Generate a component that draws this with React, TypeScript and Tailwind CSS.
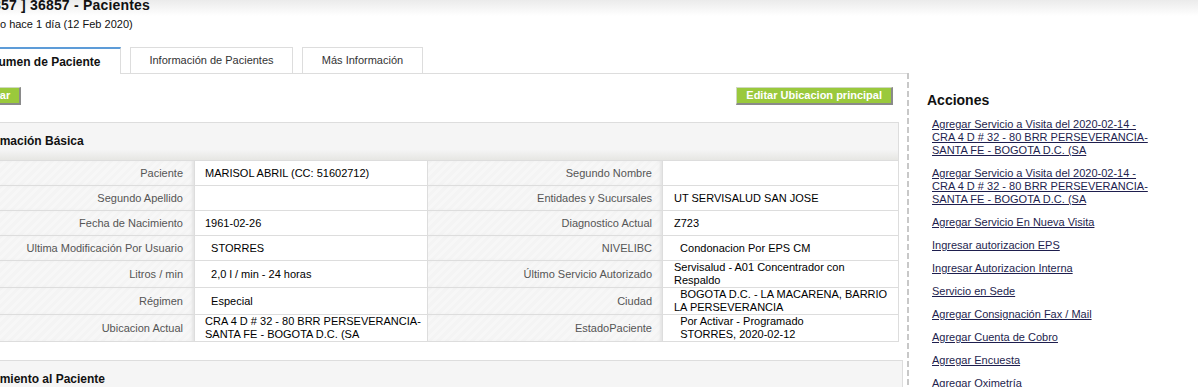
import React from 'react';

type Field = { label: string; value: React.ReactNode };

const sp = '\u00a0\u00a0';

const rows: [Field, Field][] = [
  [
    { label: 'Paciente', value: 'MARISOL ABRIL (CC: 51602712)' },
    { label: 'Segundo Nombre', value: '' },
  ],
  [
    { label: 'Segundo Apellido', value: '' },
    { label: 'Entidades y Sucursales', value: 'UT SERVISALUD SAN JOSE' },
  ],
  [
    { label: 'Fecha de Nacimiento', value: '1961-02-26' },
    { label: 'Diagnostico Actual', value: 'Z723' },
  ],
  [
    { label: 'Ultima Modificación Por Usuario', value: sp + 'STORRES' },
    { label: 'NIVELIBC', value: sp + 'Condonacion Por EPS CM' },
  ],
  [
    { label: 'Litros / min', value: sp + '2,0 l / min - 24 horas' },
    {
      label: 'Último Servicio Autorizado',
      value: (
        <>
          Servisalud - A01 Concentrador con
          <br />
          Respaldo
        </>
      ),
    },
  ],
  [
    { label: 'Régimen', value: sp + 'Especial' },
    {
      label: 'Ciudad',
      value: (
        <>
          {sp}BOGOTA D.C. - LA MACARENA, BARRIO
          <br />
          LA PERSEVERANCIA
        </>
      ),
    },
  ],
  [
    {
      label: 'Ubicacion Actual',
      value: (
        <>
          CRA 4 D # 32 - 80 BRR PERSEVERANCIA-
          <br />
          SANTA FE - BOGOTA D.C. (SA
        </>
      ),
    },
    {
      label: 'EstadoPaciente',
      value: (
        <>
          {sp}Por Activar - Programado
          <br />
          {sp}STORRES, 2020-02-12
        </>
      ),
    },
  ],
];

const visita = [
  'Agregar Servicio a Visita del 2020-02-14 -',
  'CRA 4 D # 32 - 80 BRR PERSEVERANCIA-',
  'SANTA FE - BOGOTA D.C. (SA',
];

const acciones: string[][] = [
  visita,
  visita,
  ['Agregar Servicio En Nueva Visita'],
  ['Ingresar autorizacion EPS'],
  ['Ingresar Autorizacion Interna'],
  ['Servicio en Sede'],
  ['Agregar Consignación Fax / Mail'],
  ['Agregar Cuenta de Cobro'],
  ['Agregar Encuesta'],
  ['Agregar Oximetría'],
];

const labelCell =
  'flex items-center justify-end text-right text-[#555] border-r border-[#ddd] bg-[repeating-linear-gradient(135deg,#f4f4f4_0px,#f4f4f4_3px,#f7f7f7_3px,#f7f7f7_6px)] shadow-[inset_-3px_0_3px_-1px_#e4e4e4]';

function GreenButton({ children, className = '' }: { children: React.ReactNode; className?: string }) {
  return (
    <button
      className={`h-[18px] bg-[#9ac93c] border-t border-l border-t-[#cfd8c0] border-l-[#cfd8c0] border-b-2 border-r-2 border-b-[#8a8a8a] border-r-[#8a8a8a] px-[9px] text-[11px] font-bold leading-[15px] text-white ${className}`}
    >
      {children}
    </button>
  );
}

export default function App() {
  return (
    <div className="w-[1198px] h-[387px] overflow-hidden bg-[linear-gradient(to_bottom,#ebebeb_0px,#ffffff_16px)] font-['Liberation_Sans',Arial,sans-serif] text-black">
      <div className="-ml-[44px]">
        {/* Header */}
        <h1 className="pl-[12px] text-[14px] font-bold leading-[10px] tracking-[0.2px] text-[#111]">
          [ 36857 ] 36857 - Pacientes
        </h1>
        <p className="mt-[8px] pl-[14px] text-[11px] leading-[13px] text-[#111]">Creado hace 1 día (12 Feb 2020)</p>

        <div className="mt-[16px] flex">
          {/* Main column */}
          <div className="w-[951px] shrink-0">
            {/* Tabs */}
            <div className="flex h-[27px] items-end border-b border-[#ddd]">
              <div className="-mb-px flex h-[27px] w-[165px] items-center justify-center border-t-2 border-x border-t-[#5d9cd8] border-x-[#ddd] bg-white text-[12px] font-bold leading-[14px] text-[#111]">
                Resumen de Paciente
              </div>
              <div className="ml-[9px] flex h-[26px] w-[163px] items-center justify-center border-t border-x border-[#ddd] bg-white text-[11px] leading-[13px] text-[#333]">
                Información de Pacientes
              </div>
              <div className="ml-[9px] flex h-[26px] w-[121px] items-center justify-center border-t border-x border-[#ddd] bg-white text-[11px] leading-[13px] text-[#333]">
                Más Información
              </div>
            </div>

            {/* Buttons */}
            <div className="mt-[13px] flex items-start justify-between">
              <GreenButton className="ml-[13px]">Editar</GreenButton>
              <GreenButton className="mr-[14px]">Editar Ubicacion principal</GreenButton>
            </div>

            {/* Información Básica */}
            <div className="mt-[17px] mr-[8px] border border-[#ddd]">
              <div className="h-[37px] pl-[16px] pt-[11px] bg-[linear-gradient(to_bottom,#f5f5f5_0%,#f5f5f5_72%,#e6e6e3_100%)] text-[12px] font-bold leading-[14px] text-[#111]">
                Información Básica
              </div>
              <div className="border-t border-[#ddd] text-[11px] leading-[13px]">
                {rows.map((row, i) => (
                  <div
                    key={i}
                    className={`flex ${i < rows.length - 1 ? 'min-h-[25px] border-b border-[#ddd]' : 'min-h-[24px]'}`}
                  >
                    <div className={`${labelCell} w-[238px] shrink-0 pr-[11px]`}>{row[0].label}</div>
                    <div className="flex w-[233px] shrink-0 items-center whitespace-nowrap border-r border-[#ddd] pl-[10px] text-black">
                      <span>{row[0].value}</span>
                    </div>
                    <div className={`${labelCell} w-[235px] shrink-0 pr-[10px]`}>{row[1].label}</div>
                    <div className="flex flex-1 items-center whitespace-nowrap pl-[11px] text-black">
                      <span>{row[1].value}</span>
                    </div>
                  </div>
                ))}
              </div>
            </div>

            {/* Seguimiento */}
            <div className="mt-[18px] mr-[4px] border border-[#ddd] bg-[#f5f5f5]">
              <div className="h-[40px] pl-[10px] pt-[11px] text-[12px] font-bold leading-[14px] text-[#111]">
                Seguimiento al Paciente
              </div>
            </div>
          </div>

          {/* Sidebar */}
          <div className="mt-[26px] flex flex-1">
            <div className="w-[2px] shrink-0 bg-[repeating-linear-gradient(to_bottom,#c8c8c8_0px,#c8c8c8_6px,#ffffff_6px,#ffffff_9px)]" />
            <div className="pl-[18px] pt-[19px]">
              <h2 className="text-[14px] font-bold leading-[16px] text-[#111]">Acciones</h2>
              <ul className="mt-[10px] pl-[5px]">
                {acciones.map((lines, i) => (
                  <li key={i} className="mb-[10px] whitespace-nowrap text-[11px] leading-[13px]">
                    <a href="#" className="text-[#1e1e4e] underline">
                      {lines.map((l, j) => (
                        <React.Fragment key={j}>
                          {j > 0 && <br />}
                          {l}
                        </React.Fragment>
                      ))}
                    </a>
                  </li>
                ))}
              </ul>
            </div>
          </div>
        </div>
      </div>
    </div>
  );
}
